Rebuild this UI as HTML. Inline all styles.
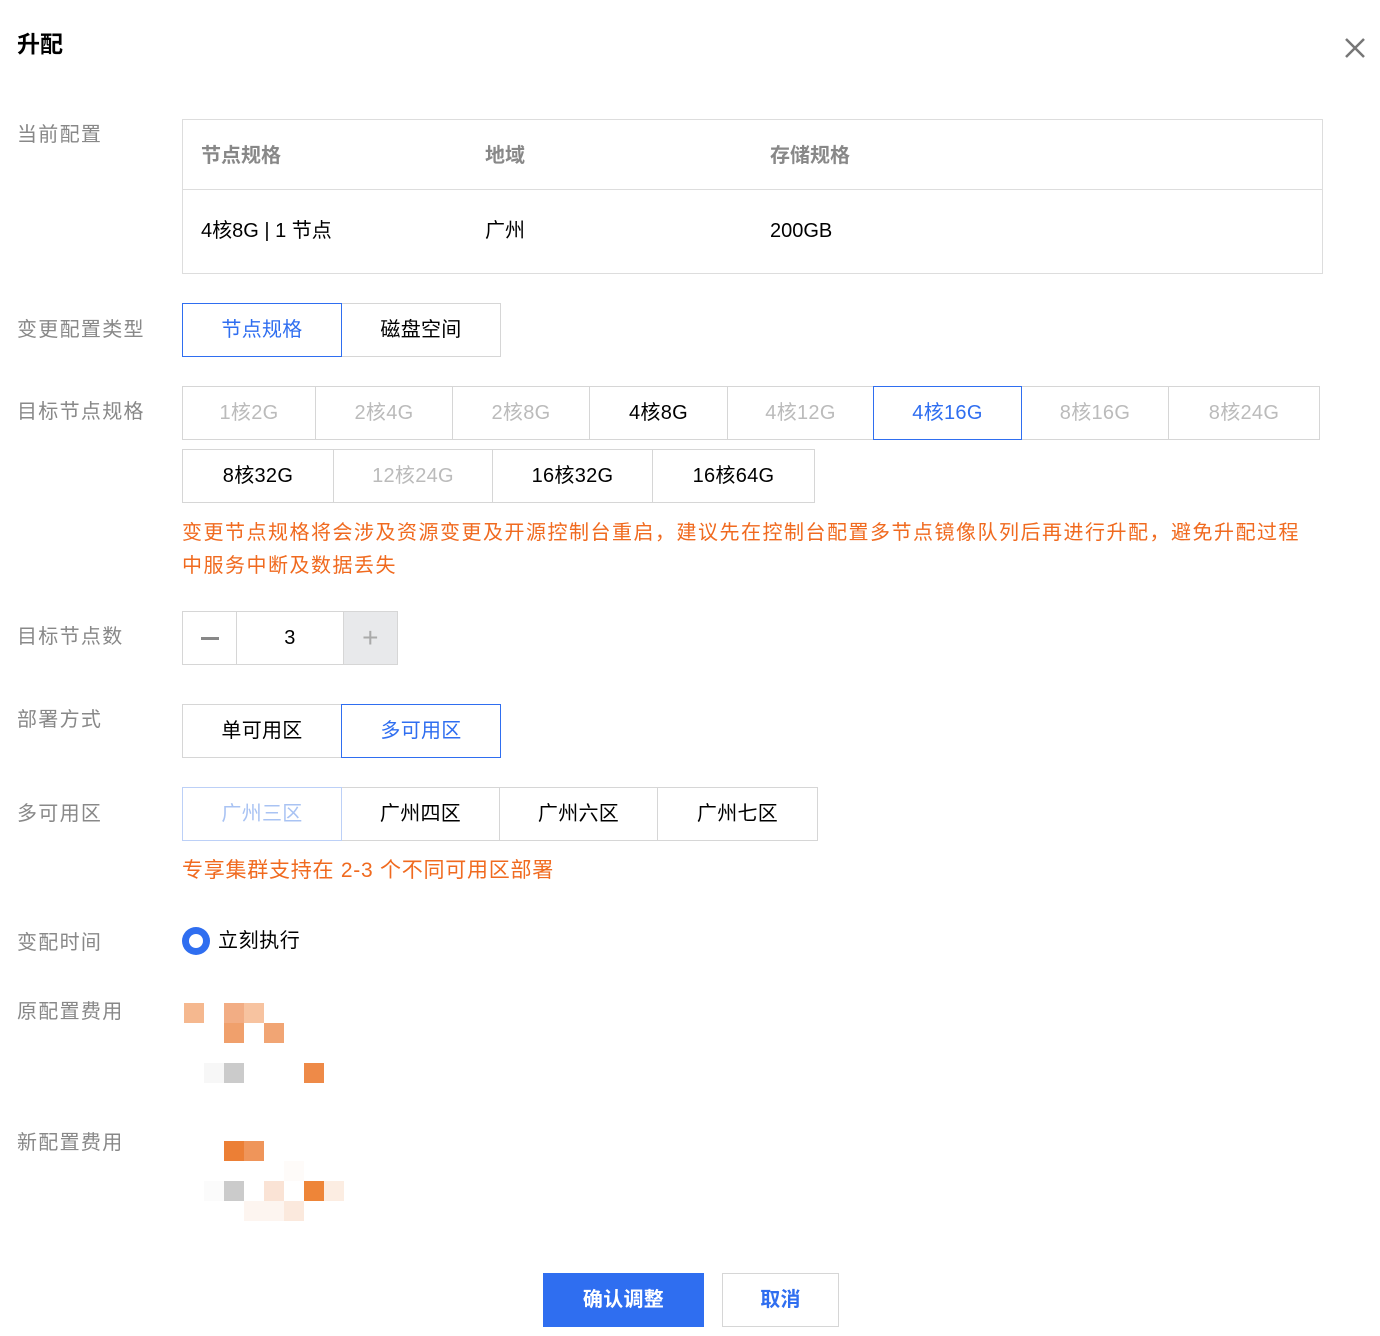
<!DOCTYPE html>
<html><head><meta charset="utf-8"><style>
body{margin:0;width:1380px;height:1336px;background:#fff;font-family:"Liberation Sans","Noto Sans CJK SC",sans-serif;position:relative;overflow:hidden;color:#000}
.a{position:absolute;line-height:24px}
.lbl{position:absolute;left:17px;font-size:20px;color:#888;line-height:24px;letter-spacing:1.3px}
.b{position:absolute;box-sizing:border-box;border:1px solid #d6d6d6;display:flex;align-items:center;justify-content:center;font-size:20px;background:#fff;line-height:24px;letter-spacing:0.3px}
.dis{color:#bbb}
.sel{border-color:#2f6ef0;color:#2f6ef0;z-index:2}
.px{position:absolute;width:20px;height:20px}
.th{font-size:20px;color:#888;font-weight:bold;top:144px}
.td{font-size:20px;top:219px}
</style></head><body>
<div class="a" style="left:17px;top:32px;font-size:23px;font-weight:bold">升配</div>
<svg class="a" style="left:1344px;top:37px" width="22" height="22"><path d="M2 2L20 20M20 2L2 20" stroke="#777" stroke-width="2.5"/></svg>

<div class="lbl" style="top:123px">当前配置</div>
<div class="a" style="left:182px;top:119px;width:1141px;height:155px;box-sizing:border-box;border:1px solid #ddd"></div>
<div class="a" style="left:183px;top:189px;width:1139px;height:1px;background:#ddd"></div>
<div class="a th" style="left:201px">节点规格</div>
<div class="a th" style="left:485px">地域</div>
<div class="a th" style="left:770px">存储规格</div>
<div class="a td" style="left:201px">4核8G | 1 节点</div>
<div class="a td" style="left:485px">广州</div>
<div class="a td" style="left:770px">200GB</div>

<div class="lbl" style="top:318px">变更配置类型</div>
<div class="b sel" style="left:182px;top:303px;width:160px;height:54px">节点规格</div>
<div class="b" style="left:341px;top:303px;width:160px;height:54px">磁盘空间</div>

<div class="lbl" style="top:400px">目标节点规格</div>
<div class="b dis" style="left:182px;top:386px;width:134px;height:54px">1核2G</div>
<div class="b dis" style="left:315px;top:386px;width:138px;height:54px">2核4G</div>
<div class="b dis" style="left:452px;top:386px;width:138px;height:54px">2核8G</div>
<div class="b" style="left:589px;top:386px;width:139px;height:54px">4核8G</div>
<div class="b dis" style="left:727px;top:386px;width:147px;height:54px">4核12G</div>
<div class="b sel" style="left:873px;top:386px;width:149px;height:54px">4核16G</div>
<div class="b dis" style="left:1021px;top:386px;width:148px;height:54px">8核16G</div>
<div class="b dis" style="left:1168px;top:386px;width:152px;height:54px">8核24G</div>
<div class="b" style="left:182px;top:449px;width:152px;height:54px">8核32G</div>
<div class="b dis" style="left:333px;top:449px;width:160px;height:54px">12核24G</div>
<div class="b" style="left:492px;top:449px;width:161px;height:54px">16核32G</div>
<div class="b" style="left:652px;top:449px;width:163px;height:54px">16核64G</div>
<div class="a" style="left:182px;top:517px;width:1130px;font-size:20px;line-height:33px;letter-spacing:1.5px;color:#f06a1f">变更节点规格将会涉及资源变更及开源控制台重启，建议先在控制台配置多节点镜像队列后再进行升配，避免升配过程中服务中断及数据丢失</div>

<div class="lbl" style="top:625px">目标节点数</div>
<div class="b" style="left:182px;top:611px;width:55px;height:54px"><div style="width:18px;height:3px;background:#888"></div></div>
<div class="b" style="left:236px;top:611px;width:108px;height:54px">3</div>
<div class="b" style="left:343px;top:611px;width:55px;height:54px;background:#e8e9eb;color:#aaa;font-size:28px">+</div>

<div class="lbl" style="top:708px">部署方式</div>
<div class="b" style="left:182px;top:704px;width:160px;height:54px">单可用区</div>
<div class="b sel" style="left:341px;top:704px;width:160px;height:54px">多可用区</div>

<div class="lbl" style="top:802px">多可用区</div>
<div class="b" style="left:182px;top:787px;width:160px;height:54px;border-color:#bcd0f7;color:#a9c3f3;z-index:2">广州三区</div>
<div class="b" style="left:341px;top:787px;width:159px;height:54px">广州四区</div>
<div class="b" style="left:499px;top:787px;width:159px;height:54px">广州六区</div>
<div class="b" style="left:657px;top:787px;width:161px;height:54px">广州七区</div>
<div class="a" style="left:182px;top:859px;font-size:21px;letter-spacing:0.75px;color:#f06a1f">专享集群支持在 2-3 个不同可用区部署</div>

<div class="lbl" style="top:931px">变配时间</div>
<div class="a" style="left:182px;top:927px;width:28px;height:28px;border-radius:50%;background:#2f6ef0"></div>
<div class="a" style="left:189px;top:934px;width:14px;height:14px;border-radius:50%;background:#fff"></div>
<div class="a" style="left:218px;top:929px;font-size:20px;letter-spacing:0.6px">立刻执行</div>

<div class="lbl" style="top:1000px">原配置费用</div>
<div class="px" style="left:184px;top:1003px;background:#f5b88f"></div>
<div class="px" style="left:224px;top:1003px;background:#f2ad84"></div>
<div class="px" style="left:244px;top:1003px;background:#f7c3a0"></div>
<div class="px" style="left:224px;top:1023px;background:#f0a06c"></div>
<div class="px" style="left:264px;top:1023px;background:#f1a574"></div>
<div class="px" style="left:204px;top:1063px;background:#f7f7f7"></div>
<div class="px" style="left:224px;top:1063px;background:#cbcbcb"></div>
<div class="px" style="left:304px;top:1063px;background:#ee8a48"></div>

<div class="lbl" style="top:1131px">新配置费用</div>
<div class="px" style="left:224px;top:1141px;background:#ec7f35"></div>
<div class="px" style="left:244px;top:1141px;background:#ef955a"></div>
<div class="px" style="left:284px;top:1161px;background:#fefbf9"></div>
<div class="px" style="left:204px;top:1181px;background:#fbfbfb"></div>
<div class="px" style="left:224px;top:1181px;background:#cbcbcb"></div>
<div class="px" style="left:264px;top:1181px;background:#fae3d5"></div>
<div class="px" style="left:304px;top:1181px;background:#ee8538"></div>
<div class="px" style="left:324px;top:1181px;background:#fcede2"></div>
<div class="px" style="left:244px;top:1201px;background:#fdf5f0"></div>
<div class="px" style="left:264px;top:1201px;background:#fdf5f0"></div>
<div class="px" style="left:284px;top:1201px;background:#fbe9dd"></div>

<div class="b" style="left:543px;top:1273px;width:161px;height:54px;background:#2f6ef0;border-color:#2f6ef0;color:#fff;font-weight:bold">确认调整</div>
<div class="b" style="left:722px;top:1273px;width:117px;height:54px;color:#2f6ef0;font-weight:bold">取消</div>
</body></html>
